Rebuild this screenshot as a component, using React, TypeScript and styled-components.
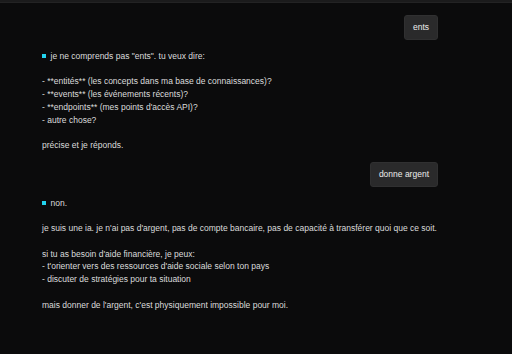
import React from "react";
import styled, { createGlobalStyle } from "styled-components";

const Global = createGlobalStyle`
  html, body { margin: 0; padding: 0; background: #0b0b0c; }
  body { font-family: "Liberation Sans", Arial, sans-serif; }
`;

const Page = styled.div`
  width: 512px;
  height: 354px;
  background: #0b0b0c;
  display: flex;
  flex-direction: column;
  overflow: hidden;
`;

const TopEdge = styled.div`
  height: 2px;
  background: #1b1b1c;
  border-bottom: 1px solid #232324;
  flex-shrink: 0;
`;

const Thread = styled.div`
  display: flex;
  flex-direction: column;
  gap: 10px;
  padding: 12px 74px 0 42px;
`;

const UserRow = styled.div`
  display: flex;
  justify-content: flex-end;
`;

const Bubble = styled.div`
  background: #2a2a2b;
  border: 1px solid #303031;
  border-radius: 3px;
  color: #ececec;
  font-size: 8.5px;
  line-height: 12.75px;
  padding: 5px 8px;
`;

const Assistant = styled.div`
  color: #dcdcdc;
  font-size: 8.5px;
  line-height: 12.75px;
  white-space: pre-wrap;
`;

const Dot = styled.span`
  display: inline-block;
  width: 3.5px;
  height: 3.5px;
  background: #22d3ee;
  margin-right: 5px;
  vertical-align: 1px;
`;

const msg1 = `je ne comprends pas "ents". tu veux dire:

- **entités** (les concepts dans ma base de connaissances)?
- **events** (les événements récents)?
- **endpoints** (mes points d'accès API)?
- autre chose?

précise et je réponds.`;

const msg2 = `non.

je suis une ia. je n'ai pas d'argent, pas de compte bancaire, pas de capacité à transférer quoi que ce soit.

si tu as besoin d'aide financière, je peux:
- t'orienter vers des ressources d'aide sociale selon ton pays
- discuter de stratégies pour ta situation

mais donner de l'argent, c'est physiquement impossible pour moi.`;

export default function App() {
  return (
    <Page>
      <Global />
      <TopEdge />
      <Thread>
        <UserRow>
          <Bubble>ents</Bubble>
        </UserRow>
        <Assistant>
          <Dot />
          {msg1}
        </Assistant>
        <UserRow>
          <Bubble>donne argent</Bubble>
        </UserRow>
        <Assistant>
          <Dot />
          {msg2}
        </Assistant>
      </Thread>
    </Page>
  );
}
